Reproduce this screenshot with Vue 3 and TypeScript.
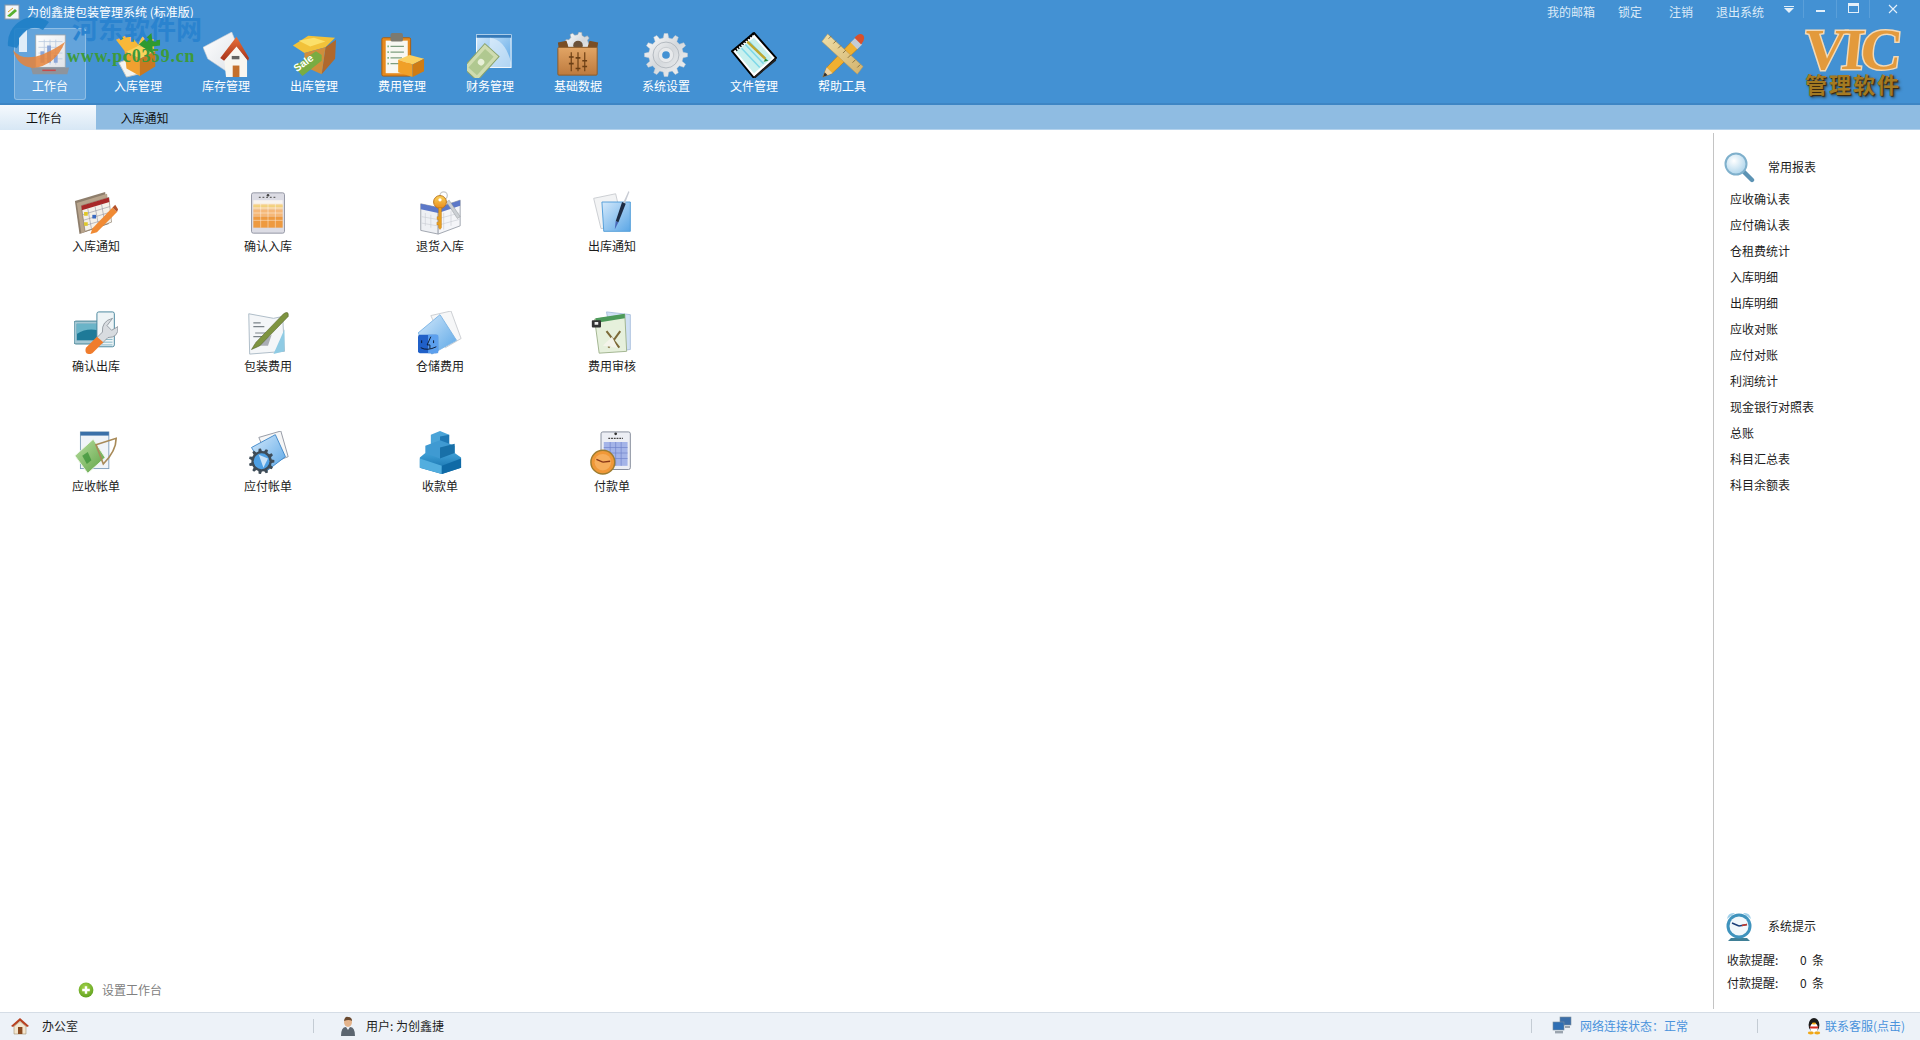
<template>
  <div class="app">
    <svg class="defs" width="0" height="0" aria-hidden="true">
      <defs>
        <linearGradient id="gOrange" x1="0" y1="0" x2="0" y2="1"><stop offset="0" stop-color="#fbd35a"/><stop offset="1" stop-color="#e88a1c"/></linearGradient>
        <linearGradient id="gBlue" x1="0" y1="0" x2="1" y2="1"><stop offset="0" stop-color="#d4e9fb"/><stop offset="1" stop-color="#5aa6e6"/></linearGradient>
        <linearGradient id="gDeep" x1="0" y1="0" x2="0" y2="1"><stop offset="0" stop-color="#3f9fd6"/><stop offset="1" stop-color="#0f6aa6"/></linearGradient>
        <linearGradient id="gSilver" x1="0" y1="0" x2="1" y2="1"><stop offset="0" stop-color="#ffffff"/><stop offset=".5" stop-color="#d4d8dc"/><stop offset="1" stop-color="#f4f5f6"/></linearGradient>
        <linearGradient id="gGreen" x1="0" y1="0" x2="1" y2="1"><stop offset="0" stop-color="#b9dfa0"/><stop offset="1" stop-color="#5da244"/></linearGradient>
        <linearGradient id="gWood" x1="0" y1="0" x2="0" y2="1"><stop offset="0" stop-color="#e2a565"/><stop offset="1" stop-color="#bd7a3e"/></linearGradient>
        <linearGradient id="gPaper" x1="0" y1="0" x2="1" y2="1"><stop offset="0" stop-color="#ffffff"/><stop offset="1" stop-color="#dfe3e8"/></linearGradient>
        <linearGradient id="gRoof" x1="0" y1="0" x2="0" y2="1"><stop offset="0" stop-color="#e8703a"/><stop offset="1" stop-color="#a8331a"/></linearGradient>
        <linearGradient id="gTan" x1="0" y1="0" x2="1" y2="1"><stop offset="0" stop-color="#f0dfa8"/><stop offset="1" stop-color="#d2b26c"/></linearGradient>
        <radialGradient id="gLens" cx=".4" cy=".35" r=".7"><stop offset="0" stop-color="#ffffff"/><stop offset="1" stop-color="#a9d2ea"/></radialGradient>
        <radialGradient id="gPlus" cx=".45" cy=".35" r=".7"><stop offset="0" stop-color="#a8d64e"/><stop offset="1" stop-color="#5c9e1c"/></radialGradient>
      </defs>
    </svg>

    <header class="top">
      <div class="title-row">
        <svg class="app-ico" viewBox="0 0 16 16"><rect x="1" y="1" width="14" height="14" fill="#f4f6f8" stroke="#8a9aa8"/><path d="M3 12 L11 5 L13 7 L6 13 Z" fill="#58b030"/><path d="M4 8 L9 4" stroke="#d8a020"/></svg>
        <span class="app-name">为创鑫捷包装管理系统 (标准版)</span>
        <div class="links">
          <a v-for="l in topLinks" :key="l.text" class="link" :style="{ width: l.w + 'px' }">{{ l.text }}</a>
        </div>
        <div class="win-btns">
          <span class="menu-arrow"><i class="bar"></i><i class="tri"></i></span>
          <span class="win-btn"><i class="min"></i></span>
          <span class="win-btn"><i class="max"></i></span>
          <span class="win-btn close-btn">
            <svg width="10" height="10" viewBox="0 0 10 10"><path d="M1 1 L9 9 M9 1 L1 9" stroke="#e4f0fa" stroke-width="1.1"/></svg>
          </span>
        </div>
      </div>
      <div class="nav-row">
        <nav class="nav">
          <div v-for="(n, i) in navItems" :key="n.label" class="nav-item" :class="{ active: i === 0 }">
            <svg class="nav-ico" viewBox="0 0 48 48" v-html="navIcons[n.icon]"></svg>
            <span class="nav-label">{{ n.label }}</span>
          </div>
        </nav>
        <div class="brand">
          <div class="brand-vic">VIC</div>
          <div class="brand-sub">管理软件</div>
        </div>
      </div>
    </header>

    <div class="tabs">
      <div class="tab on">工作台</div>
      <div class="tab">入库通知</div>
    </div>

    <main class="main">
      <section class="desk">
        <div class="grid">
          <div v-for="g in gridItems" :key="g.label" class="cell">
            <svg class="cell-ico" viewBox="0 0 48 48" v-html="gridIcons[g.icon]"></svg>
            <span class="cell-label">{{ g.label }}</span>
          </div>
        </div>
        <div class="setup">
          <svg class="plus" viewBox="0 0 16 16">
            <circle cx="8" cy="8" r="7.4" fill="url(#gPlus)"/>
            <path d="M8 4.2v7.6M4.2 8h7.6" stroke="#fff" stroke-width="2.4"/>
          </svg>
          <span>设置工作台</span>
        </div>
      </section>

      <aside class="side">
        <div class="side-head">
          <svg class="side-ico" viewBox="0 0 32 32">
            <path d="M20 20 L29 29" stroke="#5c93b4" stroke-width="4.4" stroke-linecap="round"/>
            <circle cx="13" cy="13" r="10.5" fill="url(#gLens)" stroke="#7fb0cc" stroke-width="2"/>
          </svg>
          <span>常用报表</span>
        </div>
        <ul class="reports">
          <li v-for="r in reports" :key="r">{{ r }}</li>
        </ul>
        <div class="notice">
          <div class="side-head tip-head">
            <svg class="side-ico" viewBox="0 0 32 32">
              <path d="M4 9 Q5 2 12 3 Z M28 9 Q27 2 20 3 Z" fill="#9fd0ea"/>
              <path d="M8 28 L5 31 H27 L24 28 Z" fill="#3f7f96"/>
              <circle cx="16" cy="16" r="12.5" fill="#3f93bd"/>
              <circle cx="16" cy="16" r="9.5" fill="#f2f8fb"/>
              <path d="M16 16 L9 13 M16 16 L24 14.5" stroke="#1c3f78" stroke-width="1.5"/>
              <path d="M19 15.5 L24 14.5" stroke="#c83a2a" stroke-width="1.5"/>
            </svg>
            <span>系统提示</span>
          </div>
          <div v-for="t in tips" :key="t" class="tip">
            <span class="tip-name">{{ t }}:</span>
            <span class="tip-num">0</span>
            <span>条</span>
          </div>
        </div>
      </aside>
    </main>

    <footer class="status">
      <div class="st st-home">
        <svg class="st-ico" viewBox="0 0 20 20">
          <path d="M1 10 L10 2 L19 10 L17 11 L10 5 L3 11 Z" fill="#b8401e"/>
          <path d="M4 10.5 L10 5.5 L16 10.5 V18 H4 Z" fill="#f3e6cf" stroke="#a59070" stroke-width=".6"/>
          <rect x="8" y="11" width="4.4" height="7" fill="#8a4a20"/>
        </svg>
        <span>办公室</span>
      </div>
      <div class="st st-user">
        <svg class="st-ico user" viewBox="0 0 20 20">
          <ellipse cx="10" cy="6" rx="4" ry="5" fill="#e4b48c"/>
          <path d="M6 5 Q7 0 10 1 Q14 1 14 5 Q11 3 6 5Z" fill="#6a4a30"/>
          <path d="M3 20 Q3 11 8 11 L10 14 L12 11 Q17 11 17 20 Z" fill="#5c6670"/>
        </svg>
        <span>用户: 为创鑫捷</span>
      </div>
      <div class="st st-net">
        <svg class="st-ico net" viewBox="0 0 20 20">
          <rect x="8" y="1" width="11" height="8" fill="#3b6ea8" stroke="#7e8e9c" stroke-width=".6"/>
          <rect x="1" y="6" width="11" height="8" fill="#2f6fb4" stroke="#7e8e9c" stroke-width=".6"/>
          <rect x="3" y="15" width="8" height="2.4" fill="#9aa4ae"/>
          <rect x="13" y="10" width="5" height="2" fill="#9aa4ae"/>
        </svg>
        <span>网络连接状态：正常</span>
      </div>
      <div class="st st-qq">
        <svg class="st-ico qq" viewBox="0 0 16 18">
          <ellipse cx="8" cy="8" rx="5.4" ry="7" fill="#1c1c1c"/>
          <ellipse cx="8" cy="11" rx="3.8" ry="4.4" fill="#fff"/>
          <path d="M3.4 9.4 H12.6 L11.5 11.4 H4.5 Z" fill="#d8281e"/>
          <ellipse cx="8" cy="6.4" rx="2.2" ry="1" fill="#f0a818"/>
          <ellipse cx="4.8" cy="16" rx="3" ry="1.4" fill="#f0a818"/>
          <ellipse cx="11.2" cy="16" rx="3" ry="1.4" fill="#f0a818"/>
        </svg>
        <span>联系客服(点击)</span>
      </div>
    </footer>

    <!-- watermark stamped over the top-left of the window -->
    <div class="mark">
      <svg class="mark-logo" viewBox="0 0 64 52">
        <path d="M3 30 A26 26 0 0 1 44 6 L38 14 A16 16 0 0 0 14 28 L12 32 Z" fill="#1f80c6" opacity=".9"/>
        <path d="M14 22 L22 14 V36 H14 Z" fill="#fff" opacity=".8"/>
        <path d="M8 34 Q22 52 60 26 Q50 50 28 52 Q12 50 8 34Z" fill="#e8843a" opacity=".85"/>
      </svg>
      <span class="mark-name">河东软件网</span>
      <span class="mark-url">www.pc0359.cn</span>
    </div>
  </div>
</template>

<script setup lang="ts">
interface NavItem { label: string; icon: string }
interface GridItem { label: string; icon: string }

const topLinks = [
  { text: '我的邮箱', w: 71 },
  { text: '锁定', w: 51 },
  { text: '注销', w: 47 },
  { text: '退出系统', w: 48 },
];

const navItems: NavItem[] = [
  { label: '工作台', icon: 'desk' },
  { label: '入库管理', icon: 'inbound' },
  { label: '库存管理', icon: 'stock' },
  { label: '出库管理', icon: 'sale' },
  { label: '费用管理', icon: 'fee' },
  { label: '财务管理', icon: 'finance' },
  { label: '基础数据', icon: 'base' },
  { label: '系统设置', icon: 'gear' },
  { label: '文件管理', icon: 'note' },
  { label: '帮助工具', icon: 'tools' },
];

const gridItems: GridItem[] = [
  { label: '入库通知', icon: 'calendar' },
  { label: '确认入库', icon: 'sheet' },
  { label: '退货入库', icon: 'keys' },
  { label: '出库通知', icon: 'pen' },
  { label: '确认出库', icon: 'wrench' },
  { label: '包装费用', icon: 'sign' },
  { label: '仓储费用', icon: 'finder' },
  { label: '费用审核', icon: 'audit' },
  { label: '应收帐单', icon: 'bill' },
  { label: '应付帐单', icon: 'cog' },
  { label: '收款单', icon: 'blocks' },
  { label: '付款单', icon: 'clock' },
];

const reports = ['应收确认表', '应付确认表', '仓租费统计', '入库明细', '出库明细', '应收对账', '应付对账', '利润统计', '现金银行对照表', '总账', '科目汇总表', '科目余额表'];
const tips = ['收款提醒', '付款提醒'];

// gear outline used by a few icons
function gearPath(cx: number, cy: number, r: number, teeth: number): string {
  let d = '';
  const step = (Math.PI * 2) / teeth;
  for (let i = 0; i < teeth; i++) {
    const a = i * step;
    const pts = [[a - step * 0.3, r * 0.8], [a - step * 0.16, r], [a + step * 0.16, r], [a + step * 0.3, r * 0.8]];
    for (const [an, rad] of pts) {
      d += (d ? 'L' : 'M') + (cx + Math.cos(an) * rad).toFixed(1) + ' ' + (cy + Math.sin(an) * rad).toFixed(1);
    }
  }
  return d + 'Z';
}

const navIcons: Record<string, string> = {
  desk: `<path d="M9 3 L40 3 L40 37 L9 37Z" fill="url(#gPaper)" stroke="#9aa6b2"/>
    <path d="M12 10H37M12 16H37M12 22H37M12 28H37M18 8V34M24 8V34M30 8V34" stroke="#b9c8de" stroke-width=".8"/>
    <path d="M14 32V20h4v12M21 32V14h4v18M28 32V24h4v8" fill="#8aa6d8"/>
    <path d="M4 37 H44 L42 44 H6Z" fill="#8e949c"/><path d="M16 40H30" stroke="#c84a4a" stroke-width="1.6"/>`,
  inbound: `<path d="M4 32 L20 26 L24 44 L12 47Z" fill="#f4f4f0" stroke="#c8c8c0"/>
    <path d="M10 20 L24 14 L42 20 L26 28Z" fill="#fbd25a"/>
    <path d="M10 20 L26 28 V46 L12 38Z" fill="#f0a030"/><path d="M26 28 L42 20 V36 L26 46Z" fill="#c87820"/>
    <path d="M1 8 L15 2 L25 14 L11 21Z" fill="#f8b838"/><path d="M42 8 L28 5 L24 14 L40 20Z" fill="#f6c450"/>
    <path d="M38 1 L39 9 L47 8 L47 14 L39 15 L40 23 L25 13Z" fill="#2e9a30"/>`,
  stock: `<path d="M0 16 L30 0 L34 10 L26 42 L5 28Z" fill="url(#gPaper)" stroke="#c8ccd2" stroke-width=".6"/>
    <path d="M22 27 L35 14 L46 29 V47 H24 Z" fill="#f8f6f0"/>
    <path d="M35 5 L18 27 L22 30 L35 15 L47 30 L48 27Z" fill="url(#gRoof)"/>
    <rect x="31" y="35" width="7" height="12" fill="#c4702c"/><rect x="30" y="25" width="8" height="3.5" fill="#333" opacity=".75"/>`,
  sale: `<path d="M2 14 L18 4 L46 6 L36 16 L14 22Z" fill="#f2c23a"/>
    <path d="M8 9 L24 6 L36 10 L20 15Z" fill="#fbe06a"/>
    <path d="M36 16 L47 8 L46 28 L32 44 Z" fill="#b0682c"/>
    <path d="M14 22 L36 16 L32 44 L14 36Z" fill="#cf8e3c"/>
    <path d="M3 36 L26 20 L32 24 L32 30 L12 46 Z" fill="#79ac42"/>
    <text x="6" y="42" transform="rotate(-36 6 42)" font-family="'Liberation Sans',sans-serif" font-weight="700" font-size="11" fill="#fff">Sale</text>`,
  fee: `<rect x="3" y="6" width="30" height="40" rx="1.5" fill="#e58a1e" stroke="#a85c10"/>
    <rect x="7" y="9" width="23" height="34" fill="#f8f8f2"/>
    <rect x="12" y="1" width="13" height="9" rx="2" fill="#7c7a70"/>
    <path d="M12 15H26M12 21H26M12 27H24M12 33H22" stroke="#7e9e80" stroke-width="1.2"/>
    <path d="M9 15h1M9 21h1M9 27h1M9 33h1" stroke="#388838" stroke-width="2"/>
    <path d="M20 29 L32 24 L47 28 L35 34Z" fill="#fbd060"/><path d="M20 29 L35 34 V47 L20 42Z" fill="#f0a028"/><path d="M35 34 L47 28 V41 L35 47Z" fill="#cf7c14"/>`,
  finance: `<rect x="10" y="3" width="36" height="34" fill="url(#gBlue)" stroke="#fff"/>
    <rect x="10" y="3" width="36" height="3" fill="#3579b8"/>
    <path d="M24 6 Q40 8 46 32 V37 H22Z" fill="#eaf4fb" opacity=".6"/>
    <g transform="rotate(-48 16 30)"><rect x="-3" y="20" width="34" height="20" fill="#cfdcb0" stroke="#8aa26a"/><rect x="1" y="24" width="26" height="12" fill="#b0c890"/><circle cx="14" cy="30" r="3.4" fill="#e8f0d8"/></g>`,
  base: `<g transform="translate(0 -2)"><path d="${gearPath(24, 16, 14, 9)}" fill="url(#gSilver)" stroke="#9ea4aa" stroke-width=".6"/><circle cx="24" cy="16" r="5" fill="#6a5038"/></g>
    <path d="M3 11 L12 9 L14 16 H34 L36 9 L45 11 L44 18 H4Z" fill="#7a4e24"/>
    <rect x="3" y="16" width="41" height="29" rx="1" fill="url(#gWood)" stroke="#8a5a28"/>
    <path d="M17 21V41M24 21V41M31 21V41" stroke="#7a4a1c" stroke-width="1.4"/>
    <path d="M14.5 33h5M21.5 27h5M28.5 30h5M28.5 36h5M14.5 26h5M21.5 38h5" stroke="#6a3e14" stroke-width="1.6"/>`,
  gear: `<path d="${gearPath(24, 24, 22.5, 12)}" fill="url(#gSilver)" stroke="#c8ccd0" stroke-width=".5"/>
    <circle cx="24" cy="24" r="13.5" fill="none" stroke="#b2b8be" stroke-width="1"/>
    <circle cx="24" cy="24" r="8" fill="#e8eaec" stroke="#c8ccd0"/>
    <circle cx="24" cy="24" r="4" fill="#4391d3"/>`,
  note: `<path d="M24 1 L47 27 L24 48 L1 20Z" fill="#fff" stroke="#000" stroke-width="2"/>
    <path d="M24 47 L47 27 V30 L24 49Z" fill="#222"/>
    <path d="M24 6 L43 27 L24 43 L5 20Z" fill="#c8f0ee"/>
    <path d="M19 10 L38 30 M15 13 L34 33 M11 17 L30 37" stroke="#7fd8e8" stroke-width="1.6"/>
    <path d="M17 10 L36 28" stroke="#c0a830" stroke-width="2.6"/><path d="M36 28 L39 30 L34 31Z" fill="#2a8a3a"/>
    <path d="M5 19 L24 1" stroke="#000" stroke-width="3" stroke-dasharray="1.4 1.6"/>`,
  tools: `<path d="M4 47 L8 37 L34 10 L41 17 L14 43Z" fill="#f0b030" stroke="#b87818" stroke-width=".6"/>
    <path d="M4 47 L8 37 L14 43Z" fill="#ecd2a4"/><path d="M4 47 L6 42 L9 45Z" fill="#333"/>
    <path d="M33 11 L38 6 L45 13 L40 18Z" fill="#c4ccd4"/>
    <path d="M37 6 Q42 0 46 3 Q49 7 44 13Z" fill="#d9502c"/>
    <path d="M9 2 L46 36 L40 44 L3 10Z" fill="url(#gTan)" stroke="#b8985a" stroke-width=".6"/>
    <path d="M10 7l3-3M15 12l3-3M20 17l3-3M25 22l3-3M30 27l3-3M35 32l3-3M40 37l3-3" stroke="#8a7440" stroke-width="1"/>`,
};

const gridIcons: Record<string, string> = {
  calendar: `<path d="M1 11 L34 1 L38 36 L6 47Z" fill="#8e7e6c"/><path d="M3 13 L36 3 L40 34 L8 46Z" fill="#b8a48c"/>
    <path d="M8 16 L38 7 L41 34 L12 44Z" fill="#f4f0e8" stroke="#7a6a58" stroke-width=".6"/>
    <path d="M8 16 L38 7 L38.6 12 L8.6 21Z" fill="#a82828"/>
    <path d="M9 26 L39 17M10 32 L40 23M11 38 L41 29M15 19 L19 41M23 17 L27 39M30 14 L34 37" stroke="#8a8a98" stroke-width=".6"/>
    <path d="M11 23h4v4h-4zM11 34h4v4h-4z" fill="#e0c828"/><path d="M20 26h4v4h-4z" fill="#3868c0"/>
    <path d="M20 41 L42 18 L47 23 L25 45 L18 47Z" fill="#f08a34"/><path d="M42 18 L45 15 L48 20 L47 23Z" fill="#b4522a"/>`,
  sheet: `<rect x="6" y="2" width="36" height="44" rx="2" fill="#dcdce4" stroke="#8e92a0"/>
    <rect x="8" y="10" width="32" height="6" fill="#f8f4f0"/>
    <rect x="8" y="14" width="32" height="6" fill="#f8d8a8"/><rect x="8" y="20" width="32" height="8" fill="#f6b878"/><rect x="8" y="28" width="32" height="12" fill="#ee9a40"/>
    <rect x="8" y="16" width="32" height="0.8" fill="#e8c83a"/>
    <path d="M16 14V40M24 14V40M32 14V40M8 24H40M8 32H40" stroke="#fff" stroke-width=".6" opacity=".8"/>
    <path d="M14 7h20" stroke="#666" stroke-width="1.4" stroke-dasharray="2 2"/><circle cx="24" cy="4.6" r="1.4" fill="#444"/>`,
  keys: `<path d="M3 14 L22 18 V47 L3 43Z" fill="#eef0f4" stroke="#9aa0aa"/><path d="M22 18 L46 10 V38 L22 47Z" fill="#f4f5f8" stroke="#9aa0aa"/>
    <path d="M3 14 L22 18 L46 10 V16 L22 24 L3 20Z" fill="#5c78c8"/>
    <path d="M8 24V38M14 26V40M28 24V42M36 22V38M4 28L21 31M4 35L21 38M23 30L45 24M23 37L45 31" stroke="#c4c8d0" stroke-width=".6"/>
    <path d="M34 10 L46 28 L43 30 L31 12Z" fill="#ccd0d4" stroke="#8a8e94" stroke-width=".5"/>
    <circle cx="28" cy="5" r="4" fill="none" stroke="#c8c8c8" stroke-width="1.4"/>
    <circle cx="24" cy="12" r="7" fill="url(#gOrange)" stroke="#b87018"/><circle cx="24" cy="9.6" r="1.8" fill="#fff"/>
    <path d="M22.4 18 H25.6 V40 L24 42 L22.4 40 V37 H20.6 V34 H22.4 V31 H20.8 V28 H22.4Z" fill="#e8a020" stroke="#b87018" stroke-width=".4"/>`,
  pen: `<path d="M4 8 L28 3 L36 38 L12 41Z" fill="#f2f3f4" stroke="#c8ccd0"/>
    <path d="M13 12 H44 V44 H15 Z" fill="url(#gBlue)" stroke="#4d9ad8"/>
    <path d="M42 0 L43 1 L38 14 L36 13Z" fill="#c8ccd4"/>
    <path d="M35 12 L39 14 L31 34 L28 33Z" fill="#1e2c44"/><path d="M28 33 L31 34 L27 42Z" fill="#4868b8"/>`,
  wrench: `<rect x="0" y="11" width="29" height="25" rx="2" fill="#a6c8d4" stroke="#3f7f92"/>
    <rect x="3" y="14" width="23" height="18" fill="#1e7a98"/><path d="M3 25 Q14 18 26 21 V14H3Z" fill="#6ab4c8"/>
    <rect x="25" y="1" width="19" height="38" rx="2" fill="#eef4f6" stroke="#3f8098"/>
    <path d="M27 31H42M27 34H42M27 37H42" stroke="#7fb2c4"/>
    <path d="M48 17 Q49 29 37 29 L30 36 L24 30 L31 23 Q30 11 42 8 L36 16 L41 21Z" fill="#d8dce0" stroke="#7e868e" stroke-width=".8"/>
    <path d="M25 28 L13 40 Q11 46 16 47 Q18 47 20 46 L32 34Z" fill="#f07c2c"/>`,
  sign: `<path d="M3 3 L30 8 L40 6 L42 44 L4 47Z" fill="#f4f6f8" stroke="#a8b8c4"/>
    <path d="M30 47 L42 44 V20Z" fill="#8fcbe4"/>
    <path d="M8 13h8M8 17h12M10 24h14M8 28h16" stroke="#7a8288" stroke-width="1.2"/>
    <path d="M8 38 L28 26 L24 38Z" fill="#8a8e98" opacity=".7"/>
    <path d="M6 42 L11 34 L41 3 Q47 -1 46 6 L15 38Z" fill="#7e9440" stroke="#4e5e22" stroke-width=".6"/>`,
  finder: `<path d="M14 5 L36 0 L47 30 L30 40Z" fill="#f6f7f8" stroke="#c8ccd0"/>
    <path d="M0 24 L24 4 L42 32 L15 47Z" fill="url(#gBlue)" stroke="#7cb4e4"/>
    <rect x="0" y="26" width="22" height="20" rx="2" fill="#2060c8"/><rect x="11" y="26" width="11" height="20" fill="#5ca0ee"/>
    <path d="M14 28 L10 37 H13 V41 M4 32v3M17 32v3M3 40 Q10 44 20 39" stroke="#0a1428" fill="none" stroke-width="1"/>`,
  audit: `<path d="M18 1 L44 4 L44 42 L26 44Z" fill="#cfe0f4" stroke="#a8c0dc"/>
    <path d="M5 9 L38 4 L40 44 L10 46Z" fill="#e6f0dc" stroke="#9cb08a"/>
    <path d="M6 8 L38 3 L38 8 L6 13Z" fill="#4c9a5a"/><rect x="2" y="10" width="10" height="8" rx="1" fill="#333"/><rect x="5" y="12" width="4" height="3" fill="#eee"/>
    <path d="M18 22 L32 40 M33 22 L20 40" stroke="#7c6a38" stroke-width="2.2"/><path d="M14 38 L24 28 L30 40Z" fill="#f4f4ea"/>`,
  bill: `<rect x="7" y="1" width="31" height="40" fill="#f0f4f8" stroke="#7c9cb8"/><rect x="7" y="1" width="31" height="4" fill="#3a70a8"/>
    <path d="M1 27 L21 9 L34 29 L15 46Z" fill="url(#gGreen)" stroke="#eef6e8"/>
    <path d="M9 27 L15 23 L19 32 L14 36Z" fill="#2e8a2e" opacity=".65"/>
    <path d="M24 15 L46 8 Q46 22 32 36 Z" fill="none" stroke="#a88a58" stroke-width="1.8"/>`,
  cog: `<path d="M14 7 L38 0 L46 28 L26 36Z" fill="#f6f6f6" stroke="#8e94a0"/>
    <path d="M6 18 L32 4 L43 28 L22 44Z" fill="url(#gBlue)" stroke="#3b86c8"/>
    <path d="${gearPath(17, 33, 14, 11)}" fill="#3e4c58"/>
    <circle cx="17" cy="33" r="8.6" fill="#4ea0e4"/><path d="M14 26 L24 30 L19 40Z" fill="#c8e2f8"/>`,
  blocks: `<path d="M14 4 L24 0 L34 4 V16 L24 20 L14 16Z" fill="#4aa4d8"/><path d="M24 6 L34 4 V16 L24 20Z" fill="#1f78b4"/>
    <path d="M8 16 L24 10 L40 16 V30 L24 36 L8 30Z" fill="#3f9ad2"/><path d="M24 18 L40 14 V30 L24 36Z" fill="#1870a8"/>
    <path d="M2 29 L8 24 L24 30 L40 24 L47 29 V40 L26 47 L2 40Z" fill="url(#gDeep)"/><path d="M2 30 L26 38 V47 L2 40Z" fill="#52aedf"/><path d="M26 38 L47 30 V40 L26 47Z" fill="#0f6aa6"/>`,
  clock: `<rect x="12" y="1" width="32" height="41" rx="2" fill="#eceef4" stroke="#7e8696"/>
    <rect x="15" y="12" width="26" height="26" fill="#a4b4e8"/>
    <path d="M15 18H41M15 24H41M15 30H41M22 12V38M28 12V38M34 12V38" stroke="#6e80c8" stroke-width=".7"/>
    <path d="M20 8h16" stroke="#444" stroke-width="1.4" stroke-dasharray="2 1"/><circle cx="28" cy="3" r="1.5" fill="#333"/>
    <circle cx="14" cy="34" r="13" fill="#f09838" stroke="#9c7c30" stroke-width="1.6"/><circle cx="14" cy="34" r="9" fill="#f6ae5c"/>
    <path d="M14 34 L7 31 M14 34 L22 33" stroke="#8a3818" stroke-width="1.4"/>`,
};
</script>

<style>
html, body { margin: 0; padding: 0; background: #fff; overflow: hidden; }
</style>

<style scoped>
.app {
  position: relative;
  display: flex;
  flex-direction: column;
  height: 100vh;
  font: 12px/16px "Noto Sans CJK SC", "Liberation Sans", sans-serif;
  color: #1c1c1c;
  background: #fff;
}
.defs { position: absolute; }

.top { height: 105px; flex: none; display: flex; flex-direction: column; background: #4391d3; box-shadow: inset 0 -2px 0 #3d85c4; color: #fff; }
.title-row { height: 25px; flex: none; display: flex; align-items: flex-start; }
.app-ico { width: 16px; height: 16px; margin: 4px 0 0 4px; }
.app-name { margin: 4px 0 0 7px; }
.links { margin-left: auto; display: flex; padding-top: 4px; }
.link { color: #dcebf8; }
.win-btns { display: flex; margin-left: 10px; margin-right: 5px; height: 18px; }
.menu-arrow { width: 30px; box-sizing: border-box; display: flex; flex-direction: column; align-items: center; padding-top: 6px; border-right: 1px solid #5a9fd9; }
.menu-arrow .bar { width: 10px; height: 1px; background: #e4f0fa; margin-bottom: 1px; }
.menu-arrow .tri { width: 0; height: 0; border: 5px solid transparent; border-top: 5px solid #e4f0fa; border-bottom: 0; }
.win-btn { width: 33px; box-sizing: border-box; display: flex; align-items: center; justify-content: center; border-right: 1px solid #5a9fd9; color: #e4f0fa; }
.win-btn:last-child { border-right: 0; width: 45px; }
.win-btn .min { width: 9px; height: 2px; background: #e4f0fa; margin-top: 3px; }
.win-btn .max { width: 9px; height: 6px; border: 1px solid #e4f0fa; border-top-width: 3px; margin-top: -2px; }

.nav-row { flex: 1; display: flex; justify-content: space-between; padding: 3px 0 0 14px; }
.nav { display: flex; }
.nav-item { width: 72px; height: 72px; margin-right: 16px; box-sizing: border-box; display: flex; flex-direction: column; align-items: center; padding-top: 3px; border: 1px solid transparent; border-radius: 3px; }
.nav-item.active { background: rgba(255, 255, 255, 0.18); border-color: rgba(255, 255, 255, 0.28); }
.nav-ico { width: 46px; height: 46px; flex: none; }
.nav-label { margin-top: -1px; white-space: nowrap; color: #fff; line-height: 18px; }

.brand { width: 117px; display: flex; flex-direction: column; align-items: flex-start; }
.brand-vic { font: 700 58px/44px "Liberation Serif", serif; color: #e39a3c; -webkit-text-stroke: 3px #f2d9b6; paint-order: stroke fill; letter-spacing: -4px; white-space: nowrap; transform: skewX(-6deg); margin-left: 1px; }
.brand-sub { font: 700 22px/22px "Noto Sans CJK SC", sans-serif; color: #a47a22; text-shadow: 1px 1px 1px #3a2408, 2px 2px 3px rgba(30, 20, 0, .6); letter-spacing: 2px; margin: 0 0 0 2px; white-space: nowrap; }

.tabs { height: 25px; flex: none; display: flex; background: #8fbce2; box-shadow: inset 0 -1px 0 #b4d2ec; }
.tab { width: 97px; text-align: center; line-height: 26px; color: #111; }
.tab.on { width: 96px; box-sizing: border-box; padding-right: 8px; background: linear-gradient(#f5f9fd, #d7e7f5); }

.main { flex: 1; display: flex; min-height: 0; border-top: 3px solid #fff; }
.desk { flex: 1; display: flex; flex-direction: column; }
.grid { display: grid; grid-template-columns: repeat(4, 172px); grid-auto-rows: 120px; padding: 58px 0 0 10px; }
.cell { display: flex; flex-direction: column; align-items: center; }
.cell-ico { width: 44px; height: 44px; }
.cell-label { margin-top: 3px; }
.setup { margin-top: auto; display: flex; align-items: center; padding: 0 0 14px 78px; color: #808080; }
.plus { width: 16px; height: 16px; margin-right: 8px; }

.side { width: 206px; flex: none; border-left: 1px solid #c4c4c4; display: flex; flex-direction: column; padding-top: 18px; margin-bottom: 3px; }
.side-head { display: flex; align-items: center; height: 32px; padding-left: 9px; }
.side-ico { width: 32px; height: 32px; margin-right: 13px; }
.reports { list-style: none; margin: 0; padding: 3px 0 0 16px; }
.reports li { height: 26px; line-height: 26px; }
.notice { margin-top: auto; padding-bottom: 15px; }
.tip-head { margin-bottom: 6px; }
.tip { display: flex; height: 23px; align-items: center; padding-left: 13px; }
.tip-name { width: 73px; }
.tip-num { width: 12px; }

.status { height: 28px; flex: none; display: flex; align-items: center; padding-bottom: 2px; background: #edf2f8; border-top: 1px solid #d5dde6; box-sizing: border-box; }
.st { display: flex; align-items: center; height: 100%; }
.st-ico { width: 20px; height: 20px; }
.st-home { width: 313px; padding-left: 10px; box-sizing: border-box; }
.st-home span { margin-left: 12px; }
.st-user { width: 1218px; padding-left: 24px; box-sizing: border-box; border-left: 1px solid #c4ccd4; height: 14px; }
.st-user span { margin-left: 8px; }
.st-net { width: 226px; padding-left: 20px; box-sizing: border-box; border-left: 1px solid #c4ccd4; height: 14px; color: #4a93dc; }
.st-net span { margin-left: 8px; }
.st-qq { flex: 1; justify-content: flex-end; padding-right: 15px; border-left: 1px solid #c4ccd4; height: 14px; color: #4a93dc; }
.st-ico.qq { width: 16px; height: 18px; margin-right: 3px; }

.mark { position: absolute; left: 5px; top: 14px; width: 210px; height: 56px; pointer-events: none; }
.mark-logo { position: absolute; left: 0; top: 2px; width: 64px; height: 52px; }
.mark-name { position: absolute; left: 67px; top: 0; font: 700 26px/28px "Noto Sans CJK SC", sans-serif; color: #2a83cf; white-space: nowrap; }
.mark-url { position: absolute; left: 62px; top: 32px; font: 700 18px/20px "Liberation Serif", serif; color: #3d9a3a; white-space: nowrap; letter-spacing: .7px; }
</style>
